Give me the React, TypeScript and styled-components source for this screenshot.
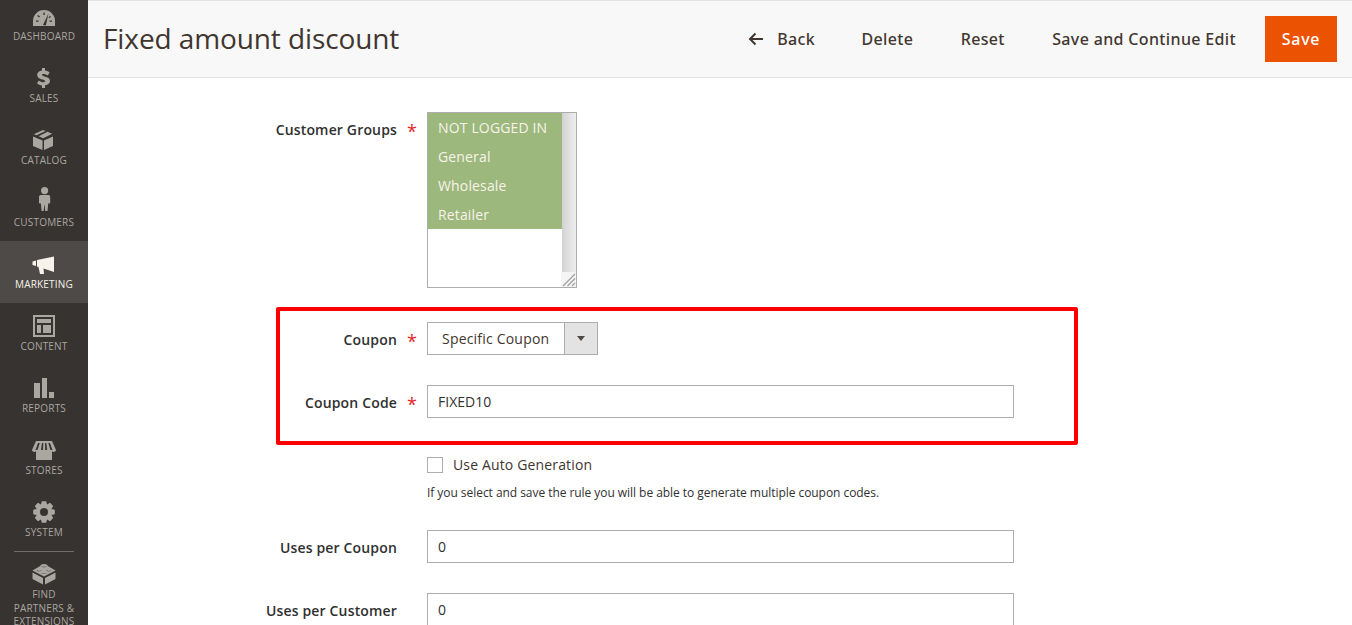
import React from 'react'
import styled, { createGlobalStyle } from 'styled-components'

const Global = createGlobalStyle`
  html, body {
    margin: 0;
    height: 625px;
    overflow: hidden;
    background: #fff;
    font-family: "Open Sans", "Noto Sans", sans-serif;
    color: #303030;
  }
  * { box-sizing: border-box; }
`

const Page = styled.div`
  display: flex;
  width: 1352px;
  height: 625px;
  overflow: hidden;
`

const Sidebar = styled.nav`
  width: 88px;
  flex: none;
  background: #373330;
  height: 625px;
  overflow: hidden;
`

/* the menu is scrolled a little in the picture, so the first item is cut off */
const NavList = styled.div`
  display: flex;
  flex-direction: column;
  margin-top: -7px;
`

const NavItem = styled.a<{ $active?: boolean; $last?: boolean }>`
  display: flex;
  flex-direction: column;
  align-items: center;
  flex: none;
  height: 62px;
  padding-top: 8px;
  background: ${p => (p.$active ? '#4e4a47' : 'transparent')};
  color: ${p => (p.$active ? '#f7f3eb' : '#aaa6a0')};
  font-size: 10px;
  line-height: ${p => (p.$last ? '13.5px' : '14px')};
  letter-spacing: 0.2px;
  text-align: center;
  text-transform: uppercase;
  white-space: nowrap;
`

const NavIcon = styled.svg`
  width: 28px;
  height: 28px;
  display: block;
  fill: currentColor;
  flex: none;
`

const NavDivider = styled.div`
  width: 60px;
  height: 1px;
  background: #736e69;
  margin: 0 auto;
  flex: none;
`

const Main = styled.main`
  flex: 1;
  min-width: 0;
  display: flex;
  flex-direction: column;
`

const Header = styled.header`
  height: 78px;
  flex: none;
  display: flex;
  align-items: center;
  background: #f8f8f8;
  border-top: 1px solid #e3e3e3;
  border-bottom: 1px solid #e3e3e3;
  padding: 0 15px;
`

const Title = styled.h1`
  margin: 0 0 2px;
  font-size: 28px;
  font-weight: 400;
  line-height: 36px;
  letter-spacing: -0.1px;
  color: #41362f;
  flex: 1;
`

const HeaderButton = styled.button<{ $space?: number }>`
  border: 0;
  background: none;
  padding: 0;
  margin-right: ${p => p.$space ?? 47.4}px;
  display: flex;
  align-items: center;
  gap: 13px;
  font: 500 16px/22px "Noto Sans", sans-serif;
  color: #41362f;
  letter-spacing: 0.35px;
`

const SaveButton = styled.button`
  border: 0;
  width: 72px;
  height: 46px;
  margin-left: -18.4px;
  background: #eb5202;
  color: #fff;
  font: 500 16px/22px "Noto Sans", sans-serif;
  letter-spacing: 0.7px;
`

const Form = styled.form`
  padding: 34px 0 0 159px;
  display: flex;
  flex-direction: column;
`

const Row = styled.div<{ $labelWidth?: number; $gap?: number }>`
  display: grid;
  grid-template-columns: ${p => p.$labelWidth ?? 150}px 30px 587px;
  align-items: start;
  margin-bottom: ${p => p.$gap ?? 0}px;
`

const Label = styled.label`
  font-size: 14px;
  font-weight: 600;
  line-height: 20px;
  letter-spacing: 0.16px;
  padding-top: 8px;
  text-align: right;
  white-space: nowrap;
  direction: rtl;
  color: #303030;
`

const Star = styled.span`
  color: #e22626;
  font-size: 18px;
  font-weight: 400;
  line-height: 20px;
  padding: 9px 0 0 10px;
`

const ListBox = styled.div`
  position: relative;
  width: 150px;
  height: 176px;
  border: 1px solid #adadad;
  background: #fff;
  padding-right: 14px;
`

const ListOption = styled.div`
  height: 29px;
  background: #9db87c;
  color: #f7f3eb;
  font-size: 14px;
  line-height: 29px;
  letter-spacing: 0.15px;
  padding-left: 10px;
  white-space: nowrap;
`

const ScrollTrack = styled.div`
  position: absolute;
  top: 0;
  right: 0;
  bottom: 15px;
  width: 14px;
  background: linear-gradient(90deg, #d2d2d2, #efefef);
`

const Grip = styled.svg`
  position: absolute;
  right: 0;
  bottom: 0;
  width: 15px;
  height: 15px;
  background: #f4f4f4;
`

const Highlight = styled.section`
  margin: 19px 0 0 29px;
  width: 802px;
  height: 138px;
  border: 4px solid #f00;
  border-radius: 2px;
  padding-top: 11px;
`

const Select = styled.div`
  display: flex;
  width: 171px;
  height: 33px;
  border: 1px solid #adadad;
  background: #fff;
`

const SelectValue = styled.span`
  flex: 1;
  font-size: 14px;
  line-height: 31px;
  letter-spacing: 0.2px;
  padding-left: 14px;
  color: #41362f;
  white-space: nowrap;
`

const SelectArrow = styled.span`
  width: 33px;
  flex: none;
  background: #e3e3e3;
  border-left: 1px solid #adadad;
  display: flex;
  align-items: center;
  justify-content: center;
  &::after {
    content: '';
    border-style: solid;
    border-width: 5px 4px 0 4px;
    border-color: #514943 transparent transparent transparent;
  }
`

const Input = styled.input`
  width: 587px;
  height: 33px;
  border: 1px solid #adadad;
  background: #fff;
  padding: 0 10px;
  font: 400 14px "Open Sans", sans-serif;
  color: #303030;
  display: block;
`

const Offset = styled.div`
  margin: 10px 0 0 180px;
`

const CheckRow = styled.label`
  display: flex;
  align-items: center;
  gap: 10px;
  font-size: 14px;
  line-height: 20px;
  letter-spacing: 0.15px;
  color: #41362f;
`

const Check = styled.span`
  width: 16px;
  height: 16px;
  border: 1px solid #adadad;
  background: #fff;
`

const Note = styled.p`
  margin: 10px 0 29px;
  font-size: 12px;
  line-height: 16px;
  letter-spacing: -0.05px;
  color: #303030;
`

const gear = () => {
  const cx = 14
  const cy = 15
  let d = ''
  for (let i = 0; i < 8; i++) {
    const a = (i * Math.PI) / 4 - Math.PI / 2
    const pt = (r: number, o: number) =>
      `${(cx + r * Math.cos(a + o)).toFixed(2)} ${(cy + r * Math.sin(a + o)).toFixed(2)}`
    d += `${i === 0 ? 'M' : 'L'}${pt(8, -0.39)}L${pt(11, -0.2)}L${pt(11, 0.2)}L${pt(8, 0.39)}`
  }
  return d + `ZM${cx} ${cy - 4}A4 4 0 1 0 ${cx} ${cy + 4}A4 4 0 1 0 ${cx} ${cy - 4}Z`
}

const items = [
  { label: 'Dashboard', d: 'M3 25V20A11 11 0 0 1 25 20V25ZM13 24L18.5 12.5L15.8 24.5ZM6 19.5H8.5V20.8H6ZM8 14L10 15.6L9.2 16.5L7.2 14.9ZM13.4 11.5H14.7V14H13.4ZM19.6 19.5H22V20.8H19.6ZM20 14.8L21 15.7L19.4 17.2L18.6 16.4Z' },
  { label: 'Sales', d: 'M12 5H15V7.6C17 7.9 18.6 8.7 19.6 9.6L17.8 12.4C16.6 11.5 15 10.9 13.6 10.9C12.6 10.9 12 11.3 12 11.9C12 13.8 20 13 20 18C20 20.3 18.2 21.9 15 22.3V25H12V22.4C10 22.2 8.2 21.4 7 20.2L8.9 17.4C10.2 18.5 11.9 19.2 13.4 19.2C14.5 19.2 15.2 18.8 15.2 18.1C15.2 16.2 7.2 16.8 7.2 12C7.2 9.8 9 8.1 12 7.6Z' },
  { label: 'Catalog', d: 'M3 11.5L12.5 15.5V25L3 21ZM14 15.5L23 11.5V21L14 25ZM13 5L15.5 6L6.5 10.2L3.8 9.2ZM17.5 6.8L22.2 8.8L13.2 13.3L8.6 11.2Z' },
  { label: 'Customers', d: 'M14.6 0A3.6 3.6 0 1 1 14.6 7.2A3.6 3.6 0 1 1 14.6 0ZM11 8H18.5C19.5 8 20.2 8.8 20.2 9.8V15.5C20.2 16.5 19 17 18.3 16L17.5 24H15.2L14.6 18H14.2L13.7 24H11.6L10.8 16C10 17 9 16.5 9 15.5V9.8C9 8.8 10 8 11 8Z' },
  { label: 'Marketing', active: true, d: 'M2.5 12.5L6 11.5V17L2.5 16ZM7 11L24 7.5V23L13.5 19.5L14 25H10L8.5 18L7 17.5Z' },
  { label: 'Content', d: 'M3 4H25V26H3ZM5 6V24H23V6ZM7 8H21V12H7ZM7 14H11V22H7ZM13 14H21V22H13Z' },
  { label: 'Reports', d: 'M4 10H10V25H4ZM12 5H17V25H12ZM19 19H24V25H19Z' },
  { label: 'Stores', d: 'M6 6H22L26 15C26 17 23 17.5 22 16.3V25H6V16.3C5 17.5 2 17 2 15ZM8 8L5.5 15H7.5L9.8 8ZM12 8L11 15H13L13.3 8ZM15 8L15.2 15H17.2L16.3 8ZM18.3 8L20.4 15H22.4L20 8Z' },
  { label: 'System', d: gear() },
]

const App = () => {
  return (
    <Page>
      <Global />
      <Sidebar>
        <NavList>
          {items.map(it => (
            <NavItem key={it.label} $active={it.active}>
              <NavIcon viewBox="0 0 28 28">
                <path d={it.d} fillRule="evenodd" />
              </NavIcon>
              {it.label}
            </NavItem>
          ))}
          <NavDivider />
          <NavItem $last>
            <NavIcon viewBox="0 0 28 28">
              <path
                fillRule="evenodd"
                d="M2.5 12.5L13 18V24.5L2.5 19ZM15 18L25.5 12.5V19L15 24.5ZM14 4C16 4 17.5 4.8 17.8 6L25.5 10.5L14 16.5L2.5 10.5L10.2 6C10.5 4.8 12 4 14 4ZM11 6.2C11.8 7.6 16.2 7.6 17 6.2C16 7 12 7 11 6.2ZM6 10.3C6.8 11.7 11.2 11.7 12 10.3C11 11.1 7 11.1 6 10.3ZM16 10.3C16.8 11.7 21.2 11.7 22 10.3C21 11.1 17 11.1 16 10.3ZM11 13C11.8 14.2 16.2 14.2 17 13C16 13.7 12 13.7 11 13Z"
              />
            </NavIcon>
            Find
            <br />
            Partners &amp;
            <br />
            Extensions
          </NavItem>
        </NavList>
      </Sidebar>
      <Main>
        <Header>
          <Title>Fixed amount discount</Title>
          <HeaderButton $space={46.4}>
            <svg width="16" height="14" viewBox="0 0 16 14" fill="none" stroke="#41362f" strokeWidth="2">
              <path d="M15 7H2M7.5 1.5L2 7L7.5 12.5" />
            </svg>
            Back
          </HeaderButton>
          <HeaderButton>Delete</HeaderButton>
          <HeaderButton>Reset</HeaderButton>
          <HeaderButton>Save and Continue Edit</HeaderButton>
          <SaveButton>Save</SaveButton>
        </Header>
        <Form>
          <Row>
            <Label>Customer Groups</Label>
            <Star>*</Star>
            <ListBox>
              <ListOption>NOT LOGGED IN</ListOption>
              <ListOption>General</ListOption>
              <ListOption>Wholesale</ListOption>
              <ListOption>Retailer</ListOption>
              <ScrollTrack />
              <Grip viewBox="0 0 15 15" stroke="#a0a0a0" strokeWidth="1.2">
                <path d="M14 2L2 14M14 6.5L6.5 14M14 11L11 14" />
              </Grip>
            </ListBox>
          </Row>
          <Highlight>
            <Row $labelWidth={117} $gap={30}>
              <Label>Coupon</Label>
              <Star>*</Star>
              <Select>
                <SelectValue>Specific Coupon</SelectValue>
                <SelectArrow />
              </Select>
            </Row>
            <Row $labelWidth={117}>
              <Label>Coupon Code</Label>
              <Star>*</Star>
              <Input defaultValue="FIXED10" />
            </Row>
          </Highlight>
          <Offset>
            <CheckRow>
              <Check />
              Use Auto Generation
            </CheckRow>
            <Note>If you select and save the rule you will be able to generate multiple coupon codes.</Note>
          </Offset>
          <Row $gap={30}>
            <Label>Uses per Coupon</Label>
            <span />
            <Input defaultValue="0" />
          </Row>
          <Row>
            <Label>Uses per Customer</Label>
            <span />
            <Input defaultValue="0" />
          </Row>
        </Form>
      </Main>
    </Page>
  )
}

export default App
